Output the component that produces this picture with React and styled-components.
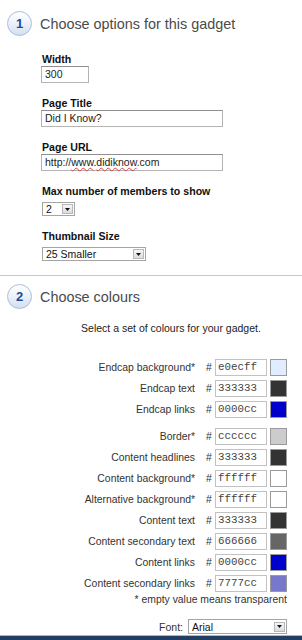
import React from 'react'
import styled, { createGlobalStyle } from 'styled-components'

const GlobalStyle = createGlobalStyle`
    html, body {
        margin: 0;
        padding: 0;
        background: #fff;
    }
    body {
        font-family: 'Liberation Sans', Arial, sans-serif;
        color: #333;
    }
`

const colourRows = [
    { label: 'Endcap background*', value: 'e0ecff', swatch: '#e0ecff' },
    { label: 'Endcap text', value: '333333', swatch: '#333333' },
    { label: 'Endcap links', value: '0000cc', swatch: '#0000cc', groupEnd: true },
    { label: 'Border*', value: 'cccccc', swatch: '#cccccc' },
    { label: 'Content headlines', value: '333333', swatch: '#333333' },
    { label: 'Content background*', value: 'ffffff', swatch: '#ffffff' },
    { label: 'Alternative background*', value: 'ffffff', swatch: '#ffffff' },
    { label: 'Content text', value: '333333', swatch: '#333333' },
    { label: 'Content secondary text', value: '666666', swatch: '#666666' },
    { label: 'Content links', value: '0000cc', swatch: '#0000cc' },
    { label: 'Content secondary links', value: '7777cc', swatch: '#7777cc' },
]

const Arrow = () => (
    <SelectButton>
        <svg width="5" height="3" viewBox="0 0 5 3">
            <path d="M0 0h5L2.5 3z" fill="#111" />
        </svg>
    </SelectButton>
)

export default function App() {
    return (
        <Page>
            <GlobalStyle />

            <StepHeader>
                <StepBadge>1</StepBadge>
                <StepTitle>Choose options for this gadget</StepTitle>
            </StepHeader>

            <Fields>
                <Field>
                    <FieldLabel>Width</FieldLabel>
                    <TextBox width={48}>300</TextBox>
                </Field>
                <Field>
                    <FieldLabel>Page Title</FieldLabel>
                    <TextBox width={182}>Did I Know?</TextBox>
                </Field>
                <Field>
                    <FieldLabel>Page URL</FieldLabel>
                    <TextBox width={182}>
                        http://<Misspelt>www</Misspelt>.<Misspelt>didiknow</Misspelt>.com
                    </TextBox>
                </Field>
                <Field>
                    <FieldLabel>Max number of members to show</FieldLabel>
                    <Select width={33}>
                        <span>2</span>
                        <Arrow />
                    </Select>
                </Field>
                <Field>
                    <FieldLabel>Thumbnail Size</FieldLabel>
                    <Select width={104}>
                        <span>25 Smaller</span>
                        <Arrow />
                    </Select>
                </Field>
            </Fields>

            <Divider />

            <StepHeader compact>
                <StepBadge>2</StepBadge>
                <StepTitle>Choose colours</StepTitle>
            </StepHeader>

            <Colours>
                <Intro>Select a set of colours for your gadget.</Intro>

                <ColourTable>
                    {colourRows.map((row, i) => (
                        <ColourRow key={i} groupEnd={row.groupEnd}>
                            <ColourLabel>{row.label}</ColourLabel>
                            <Hash>#</Hash>
                            <HexBox>{row.value}</HexBox>
                            <Swatch colour={row.swatch} />
                        </ColourRow>
                    ))}
                </ColourTable>

                <Footnote>* empty value means transparent</Footnote>

                <FontRow>
                    <span>Font:</span>
                    <Select width={99} tall>
                        <span>Arial</span>
                        <Arrow />
                    </Select>
                </FontRow>
            </Colours>

            <BottomBar />
        </Page>
    )
}

const Page = styled.div`
    width: 302px;
    min-height: 640px;
    padding-top: 11px;
    box-sizing: border-box;
    display: flex;
    flex-direction: column;
`

const StepHeader = styled.div`
    display: flex;
    align-items: center;
    gap: 8px;
    padding-left: 7px;
    height: 25px;
    margin-top: ${({ compact }) => (compact ? '8px' : '0')};
`

const StepBadge = styled.div`
    width: 23px;
    height: 23px;
    border-radius: 50%;
    border: 1px solid #a9bedb;
    background: linear-gradient(#ffffff 0%, #eef3fa 45%, #d3dff0 100%);
    display: flex;
    align-items: center;
    justify-content: center;
    color: #1d4c98;
    font-weight: bold;
    font-size: 13px;
`

const StepTitle = styled.div`
    font-size: 14.4px;
    color: #4a4a4a;
`

const Fields = styled.div`
    display: flex;
    flex-direction: column;
    gap: 13px;
    padding-left: 41px;
    margin-top: 16px;
`

const Field = styled.div`
    display: flex;
    flex-direction: column;
    align-items: flex-start;
`

const FieldLabel = styled.div`
    font-size: 10.6px;
    line-height: 14px;
    font-weight: bold;
    color: #111;
    padding-left: 1px;
`

const TextBox = styled.div`
    width: ${({ width }) => width}px;
    height: 17px;
    box-sizing: border-box;
    border: 1px solid #b4b4b4;
    border-top-color: #8f8f8f;
    padding: 0 3px;
    font-size: 10.5px;
    line-height: 14px;
    color: #222;
    white-space: nowrap;
`

const Misspelt = styled.span`
    text-decoration-line: underline;
    text-decoration-style: wavy;
    text-decoration-color: #e04040;
    text-decoration-thickness: 1px;
    text-underline-offset: 1px;
`

const Select = styled.div`
    width: ${({ width }) => width}px;
    height: ${({ tall }) => (tall ? 15 : 14)}px;
    margin-top: ${({ tall }) => (tall ? 0 : 4)}px;
    margin-left: 1px;
    box-sizing: border-box;
    border: 1px solid #a5a5a5;
    background: #fff;
    display: flex;
    align-items: center;
    justify-content: space-between;
    padding: 0 1px 0 3px;
    font-size: 10.5px;
    color: #111;
`

const SelectButton = styled.div`
    width: 11px;
    height: 10px;
    box-sizing: border-box;
    border: 1px solid #b8b8b8;
    background: linear-gradient(#f6f6f6, #dcdcdc);
    display: flex;
    align-items: center;
    justify-content: center;
`

const Divider = styled.div`
    height: 1px;
    background: #c8c8c8;
    margin-top: 14px;
`

const Colours = styled.div`
    display: flex;
    flex-direction: column;
    padding-left: 41px;
    padding-right: 15px;
    margin-top: 12px;
`

const Intro = styled.div`
    font-size: 10.5px;
    line-height: 14px;
    text-align: center;
    margin-right: -14px;
    color: #222;
`

const ColourTable = styled.div`
    display: flex;
    flex-direction: column;
    gap: 4px;
    margin-top: 24px;
`

const ColourRow = styled.div`
    display: grid;
    grid-template-columns: auto 6px 52px 17px;
    column-gap: 3px;
    justify-content: end;
    align-items: center;
    height: 17px;
    margin-bottom: ${({ groupEnd }) => (groupEnd ? '6px' : '0')};
`

const ColourLabel = styled.div`
    font-size: 10.4px;
    color: #333;
    text-align: right;
    padding-right: 8px;
    white-space: nowrap;
`

const Hash = styled.div`
    font-size: 10.4px;
    color: #333;
`

const HexBox = styled.div`
    height: 17px;
    box-sizing: border-box;
    border: 1px solid #c2c2c2;
    padding-left: 2px;
    font-family: 'Liberation Mono', 'Courier New', monospace;
    font-size: 10.8px;
    line-height: 15px;
    color: #444;
`

const Swatch = styled.div`
    height: 17px;
    box-sizing: border-box;
    border: 1px solid #9a9a9a;
    background: ${({ colour }) => colour};
`

const Footnote = styled.div`
    font-size: 10.4px;
    line-height: 14px;
    text-align: right;
    color: #333;
    margin-top: 1px;
`

const FontRow = styled.div`
    display: flex;
    justify-content: flex-end;
    align-items: center;
    gap: 4px;
    margin-top: 12px;
    font-size: 10.5px;
    color: #333;
`

const BottomBar = styled.div`
    margin-top: auto;
    height: 4px;
    border-top: 1px solid #9fbadb;
    background: #223f63;
`
